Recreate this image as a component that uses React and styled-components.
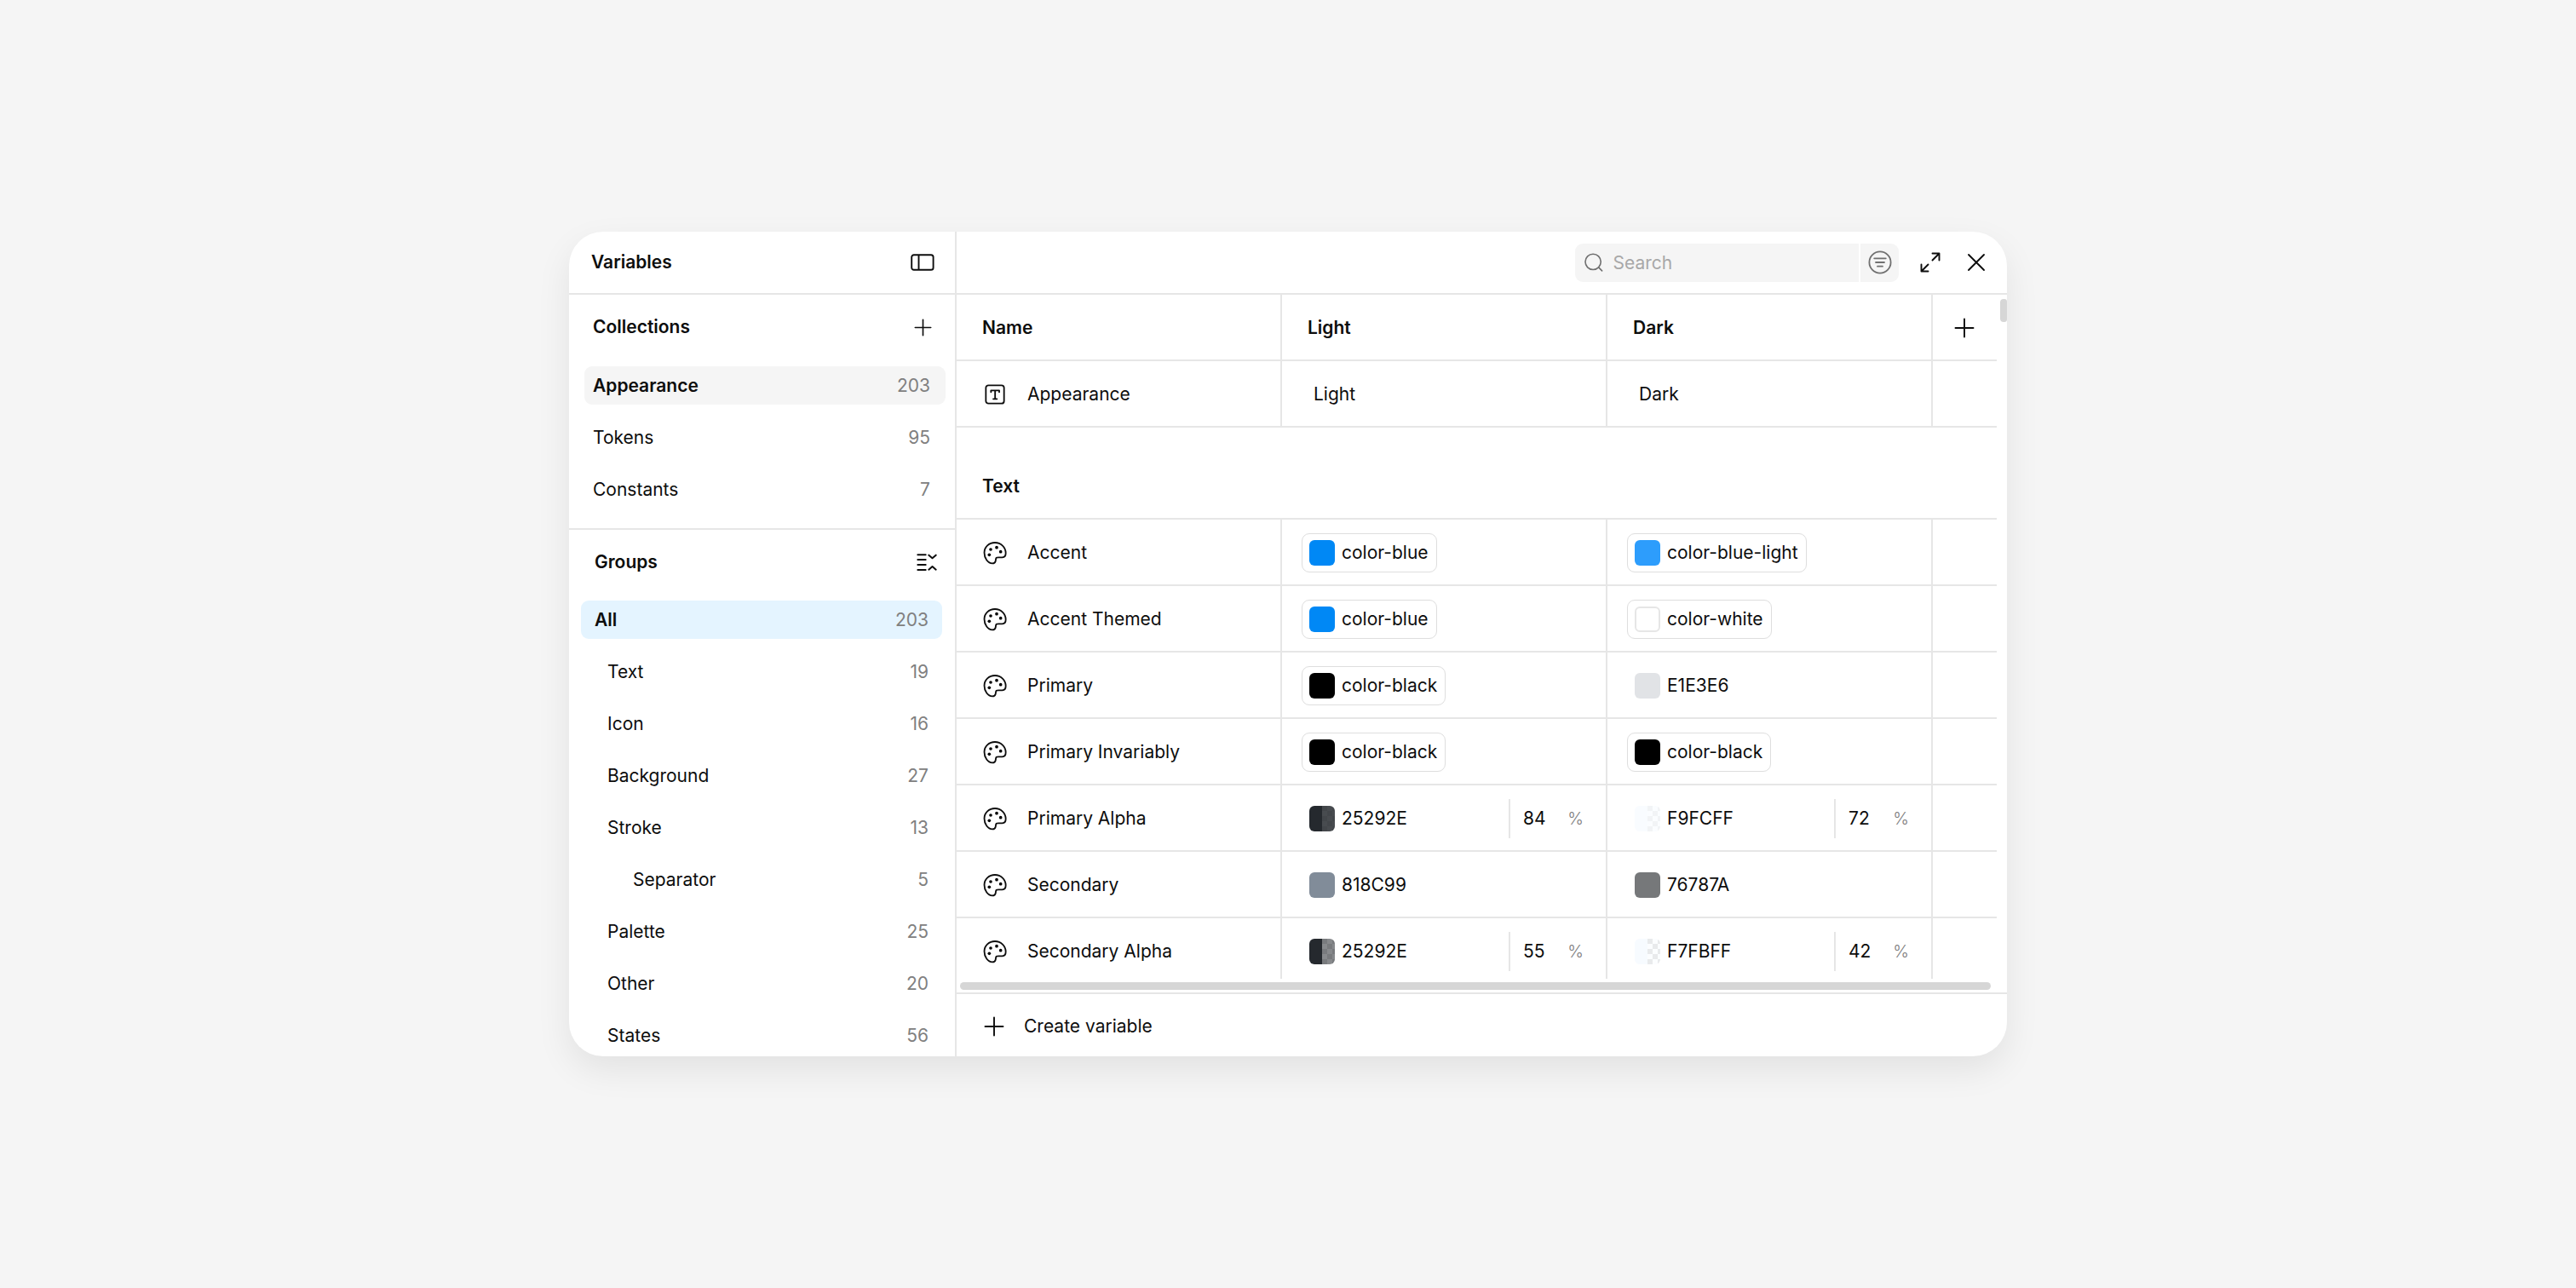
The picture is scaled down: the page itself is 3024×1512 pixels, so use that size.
import { useState } from 'react';
import styled, { createGlobalStyle } from 'styled-components';

const GlobalStyle = createGlobalStyle`
  * {
    box-sizing: border-box;
  }
  body {
    margin: 0;
    background: #f5f5f5;
    color: #0d0d0d;
    font-family: Inter, "Liberation Sans", sans-serif;
    font-size: 21px;
    line-height: 28px;
  }
  button, input {
    font: inherit;
    color: inherit;
  }
`;

const Page = styled.main`
  min-height: 100vh;
  display: flex;
  align-items: center;
  justify-content: center;
  padding: 48px;
`;

const Window = styled.div`
  display: flex;
  width: 100%;
  max-width: 1688px;
  max-height: 968px;
  overflow: hidden;
  background: #fff;
  border-radius: 40px;
  box-shadow: 0 16px 40px rgba(0, 0, 0, 0.08);
`;

const Sidebar = styled.aside`
  flex: none;
  width: 455px;
  border-right: 2px solid #e6e6e6;
`;

const SidebarHeader = styled.header`
  display: flex;
  align-items: center;
  justify-content: space-between;
  height: 74px;
  padding: 0 24px 0 26px;
  border-bottom: 2px solid #e6e6e6;
`;

const Title = styled.h1`
  margin: 0;
  font-size: 21px;
  font-weight: 600;
`;

const IconButton = styled.button`
  display: flex;
  align-items: center;
  justify-content: center;
  padding: 0;
  border: none;
  background: none;
  cursor: pointer;
`;

const Section = styled.section`
  padding: ${({ $groups }) => ($groups ? '0 15px 0 14px' : '0 11px 23px 18px')};
  border-bottom: ${({ $groups }) => ($groups ? 'none' : '2px solid #e6e6e6')};
`;

const SectionHeader = styled.div`
  display: flex;
  align-items: center;
  justify-content: space-between;
  height: 76px;
  padding: ${({ $groups }) => ($groups ? '0 6px 0 16px' : '0 16px 0 10px')};
`;

const SectionTitle = styled.h2`
  margin: 0;
  font-size: 21px;
  font-weight: 600;
`;

const List = styled.ul`
  display: flex;
  flex-direction: column;
  gap: 16px;
  margin: 0;
  padding: ${({ $groups }) => ($groups ? '7px' : '8px')} 0 0;
  list-style: none;
`;

const Item = styled.button`
  display: flex;
  align-items: center;
  justify-content: space-between;
  width: 100%;
  height: 45px;
  padding: ${({ $groups }) => ($groups ? '0 16px' : '0 18px 0 10px')};
  padding-left: ${({ $level }) => ($level ? `${$level * 30 + 1}px` : '')};
  border: none;
  border-radius: 9px;
  background: ${({ $active }) => $active || 'none'};
  font-size: 21px;
  font-weight: ${({ $active }) => ($active ? 600 : 400)};
  cursor: pointer;
`;

const Count = styled.span`
  color: #808080;
  font-weight: 400;
`;

const Main = styled.section`
  display: flex;
  flex-direction: column;
  flex: 1;
  min-width: 0;
`;

const Toolbar = styled.div`
  display: flex;
  flex: none;
  align-items: center;
  justify-content: flex-end;
  height: 74px;
  padding-right: 24px;
  border-bottom: 2px solid #e6e6e6;
`;

const SearchBox = styled.label`
  display: flex;
  align-items: center;
  gap: 12px;
  width: 333px;
  height: 45px;
  padding-left: 11px;
  border-radius: 9px 0 0 9px;
  background: #f5f5f5;
`;

const SearchInput = styled.input`
  width: 100%;
  padding: 2px 0 0;
  border: none;
  outline: none;
  background: none;
  font-size: 21px;

  &::placeholder {
    color: #a8a8a8;
    opacity: 1;
  }
`;

const FilterButton = styled(IconButton)`
  width: 45px;
  height: 45px;
  margin: 0 25px 0 2px;
  border-radius: 0 9px 9px 0;
  background: #f5f5f5;
`;

const WindowButtons = styled.div`
  display: flex;
  gap: 30px;
`;

const Body = styled.div`
  display: flex;
  flex: 0 1 auto;
  min-height: 0;
`;

const TableArea = styled.div`
  flex: 1;
  min-width: 0;
  overflow: hidden;
`;

const Table = styled.table`
  width: 100%;
  table-layout: fixed;
  border-collapse: separate;
  border-spacing: 0;
  font-size: 21px;
`;

const Cell = styled.td`
  height: 78px;
  padding: 1px 0 0 ${({ $indent }) => $indent || 0}px;
  border-bottom: 2px solid #e6e6e6;
  border-right: 2px solid #e6e6e6;
  text-align: left;
  font-weight: 400;

  &:last-child {
    border-right: none;
  }
`;

const HeadCell = styled(Cell)`
  font-weight: 600;
`;

const GroupCell = styled(Cell)`
  height: 108px;
  padding-top: 32px;
  font-weight: 600;
`;

const AddColumn = styled.col`
  width: 75px;
`;

const NameLabel = styled.span`
  display: flex;
  align-items: center;
  gap: 23px;
`;

const Value = styled.div`
  display: flex;
  align-items: center;
  justify-content: space-between;
`;

const Chip = styled.span`
  display: inline-flex;
  align-items: center;
  gap: 8px;
  height: 46px;
  padding: 0 9px 0 8px;
  border: 1px solid ${({ $linked }) => ($linked ? '#dedede' : 'transparent')};
  border-radius: 9px;
`;

const Swatch = styled.span`
  width: 30px;
  height: 30px;
  border-radius: 6px;
  border: ${({ $outlined }) => ($outlined ? '2px solid #e6e6e6' : 'none')};
  background: ${({ $color }) => $color};
`;

// left half is the solid colour, right half shows it over a checkerboard
const AlphaSwatch = styled(Swatch)`
  background:
    linear-gradient(90deg, ${({ $color }) => $color} 50%, ${({ $tint }) => $tint} 50%),
    repeating-conic-gradient(#fff 0 25%, #dedede 0 50%) 15px 0 / 12px 12px;
`;

const Opacity = styled.span`
  display: flex;
  align-items: center;
  justify-content: space-between;
  width: 114px;
  height: 46px;
  padding: 0 26px 0 15px;
  border-left: 2px solid #e6e6e6;
`;

const Unit = styled.span`
  color: #808080;
  font-size: 20px;
  font-weight: 300;
`;

const VerticalTrack = styled.div`
  flex: none;
  width: 12px;
  padding: 5px 0 0 4px;
`;

const VerticalThumb = styled.div`
  height: 27px;
  border-radius: 4px 3px 3px 4px;
  background: #d6d6d6;
`;

const HorizontalTrack = styled.div`
  flex: none;
  padding: 4px 19px 3px 4px;
`;

const HorizontalThumb = styled.div`
  height: 9px;
  border-radius: 5px;
  background: #d6d6d6;
`;

const Footer = styled.footer`
  display: flex;
  flex: none;
  align-items: center;
  height: 75px;
  padding: 2px 0 0 32px;
  border-top: 2px solid #e6e6e6;
`;

const CreateButton = styled(IconButton)`
  gap: 23px;
  font-size: 21px;
`;

const PanelIcon = () => (
  <svg width="28" height="20" viewBox="0 0 28 20" fill="none" stroke="currentColor" strokeWidth="1.9" aria-hidden="true">
    <rect x="1.2" y="1.2" width="25.4" height="17.6" rx="2.6" />
    <path d="M9.5 1v18" />
  </svg>
);

const PlusIcon = ({ size = 24 }) => (
  <svg width={size} height={size} viewBox="0 0 24 24" fill="none" stroke="currentColor" strokeWidth="1.9" strokeLinecap="round" aria-hidden="true">
    <path d="M12 1.5v21M1.5 12h21" />
  </svg>
);

const CollapseIcon = () => (
  <svg width="24" height="20" viewBox="0 0 72 60" fill="none" stroke="currentColor" strokeWidth="6" strokeLinecap="round" strokeLinejoin="round" aria-hidden="true">
    <path d="M4 4h28M4 21h28M4 39h28M4 57h28" />
    <path d="M43 5l12.5 11L68 5M43 56l12.500-11L68 56" />
  </svg>
);

const SearchIcon = () => (
  <svg width="24" height="24" viewBox="0 0 24 24" fill="none" stroke="#707070" strokeWidth="1.8" strokeLinecap="round" aria-hidden="true">
    <circle cx="11.3" cy="11.3" r="10.2" />
    <path d="M18.6 18.6l4.4 4.4" />
  </svg>
);

const FilterIcon = () => (
  <svg width="28" height="28" viewBox="0 0 28 28" fill="none" stroke="#707070" strokeWidth="1.8" strokeLinecap="round" aria-hidden="true">
    <circle cx="14" cy="14" r="12.6" />
    <path d="M7.2 9.3h13.6M9 14h10M11 18.7h6" />
  </svg>
);

const ExpandIcon = () => (
  <svg width="24" height="24" viewBox="0 0 24 24" fill="none" stroke="currentColor" strokeWidth="1.9" strokeLinecap="round" strokeLinejoin="round" aria-hidden="true">
    <path d="M14.5 1.5h8v8M22.5 1.5l-8 8M9.5 22.5h-8v-8M1.5 22.5l8-8" />
  </svg>
);

const CloseIcon = () => (
  <svg width="24" height="24" viewBox="0 0 24 24" fill="none" stroke="currentColor" strokeWidth="1.9" strokeLinecap="round" aria-hidden="true">
    <path d="M3 3l18 18M21 3L3 21" />
  </svg>
);

const StringIcon = () => (
  <svg width="30" height="30" viewBox="0 0 90 90" fill="none" stroke="currentColor" strokeWidth="5.5" strokeLinecap="round" strokeLinejoin="round" aria-hidden="true">
    <rect x="13" y="13" width="64" height="64" rx="9" />
    <path d="M31 37v-6h29v6M45.5 31v29M39 61h13" />
  </svg>
);

const PaletteIcon = () => (
  <svg width="30" height="30" viewBox="0 0 90 90" aria-hidden="true">
    <path
      d="M45 9C24 9 7.5 24 7.5 44C7.5 64 20 82 36 82C41 82 45.5 80 47 74C48.5 68 47.5 64 50 62C52 60.5 57 61 62 61L71 61C79 61 83 56 83 46C83 25 66 9 45 9Z"
      fill="none"
      stroke="currentColor"
      strokeWidth="5.5"
    />
    <circle cx="30" cy="33" r="5.5" />
    <circle cx="51" cy="26" r="5.5" />
    <circle cx="65" cy="41" r="5.5" />
    <circle cx="25" cy="52" r="5.5" />
  </svg>
);

const collections = [
  { name: 'Appearance', count: 203 },
  { name: 'Tokens', count: 95 },
  { name: 'Constants', count: 7 },
];

const groups = [
  { name: 'All', count: 203, level: 0 },
  { name: 'Text', count: 19, level: 1 },
  { name: 'Icon', count: 16, level: 1 },
  { name: 'Background', count: 27, level: 1 },
  { name: 'Stroke', count: 13, level: 1 },
  { name: 'Separator', count: 5, level: 2 },
  { name: 'Palette', count: 25, level: 1 },
  { name: 'Other', count: 20, level: 1 },
  { name: 'States', count: 56, level: 1 },
];

const blue = { label: 'color-blue', color: '#0088f5', linked: true };
const black = { label: 'color-black', color: '#000000', linked: true };

const variables = [
  { name: 'Accent', light: blue, dark: { label: 'color-blue-light', color: '#2d9dfc', linked: true } },
  { name: 'Accent Themed', light: blue, dark: { label: 'color-white', color: '#ffffff', linked: true } },
  { name: 'Primary', light: black, dark: { label: 'E1E3E6', color: '#e1e3e6' } },
  { name: 'Primary Invariably', light: black, dark: black },
  {
    name: 'Primary Alpha',
    light: { label: '25292E', color: '#25292e', opacity: 84 },
    dark: { label: 'F9FCFF', color: '#f9fcff', opacity: 72 },
  },
  { name: 'Secondary', light: { label: '818C99', color: '#818c99' }, dark: { label: '76787A', color: '#76787a' } },
  {
    name: 'Secondary Alpha',
    light: { label: '25292E', color: '#25292e', opacity: 55 },
    dark: { label: 'F7FBFF', color: '#f7fbff', opacity: 42 },
  },
];

function ColorValue({ value }) {
  const { label, color, linked, opacity } = value;

  return (
    <Value>
      <Chip $linked={linked}>
        {opacity ? (
          <AlphaSwatch $color={color} $tint={color + Math.round(opacity * 2.55).toString(16)} />
        ) : (
          <Swatch $color={color} $outlined={color === '#ffffff'} />
        )}
        {label}
      </Chip>
      {opacity && (
        <Opacity>
          {opacity}
          <Unit>%</Unit>
        </Opacity>
      )}
    </Value>
  );
}

function App() {
  const [collection, setCollection] = useState('Appearance');
  const [group, setGroup] = useState('All');
  const [query, setQuery] = useState('');

  return (
    <Page>
      <GlobalStyle />
      <Window>
        <Sidebar>
          <SidebarHeader>
            <Title>Variables</Title>
            <IconButton aria-label="Toggle sidebar">
              <PanelIcon />
            </IconButton>
          </SidebarHeader>
          <Section>
            <SectionHeader>
              <SectionTitle>Collections</SectionTitle>
              <IconButton aria-label="Add collection">
                <PlusIcon size={21} />
              </IconButton>
            </SectionHeader>
            <List>
              {collections.map((item) => (
                <li key={item.name}>
                  <Item $active={item.name === collection && '#f5f5f5'} onClick={() => setCollection(item.name)}>
                    {item.name}
                    <Count>{item.count}</Count>
                  </Item>
                </li>
              ))}
            </List>
          </Section>
          <Section $groups>
            <SectionHeader $groups>
              <SectionTitle>Groups</SectionTitle>
              <IconButton aria-label="Collapse groups">
                <CollapseIcon />
              </IconButton>
            </SectionHeader>
            <List $groups>
              {groups.map((item) => (
                <li key={item.name}>
                  <Item
                    $groups
                    $level={item.level}
                    $active={item.name === group && '#e4f4ff'}
                    onClick={() => setGroup(item.name)}
                  >
                    {item.name}
                    <Count>{item.count}</Count>
                  </Item>
                </li>
              ))}
            </List>
          </Section>
        </Sidebar>
        <Main>
          <Toolbar>
            <SearchBox>
              <SearchIcon />
              <SearchInput
                aria-label="Search"
                placeholder="Search"
                value={query}
                onChange={(event) => setQuery(event.target.value)}
              />
            </SearchBox>
            <FilterButton aria-label="Filter">
              <FilterIcon />
            </FilterButton>
            <WindowButtons>
              <IconButton aria-label="Expand">
                <ExpandIcon />
              </IconButton>
              <IconButton aria-label="Close">
                <CloseIcon />
              </IconButton>
            </WindowButtons>
          </Toolbar>
          <Body>
            <TableArea>
              <Table>
                <colgroup>
                  <col />
                  <col />
                  <col />
                  <AddColumn />
                </colgroup>
                <thead>
                  <tr>
                    <HeadCell as="th" $indent={30}>Name</HeadCell>
                    <HeadCell as="th" $indent={30}>Light</HeadCell>
                    <HeadCell as="th" $indent={30}>Dark</HeadCell>
                    <HeadCell as="th" $indent={25}>
                      <IconButton aria-label="Add mode">
                        <PlusIcon />
                      </IconButton>
                    </HeadCell>
                  </tr>
                </thead>
                <tbody>
                  <tr>
                    <Cell as="th" $indent={30}>
                      <NameLabel>
                        <StringIcon />
                        Appearance
                      </NameLabel>
                    </Cell>
                    <Cell $indent={37}>Light</Cell>
                    <Cell $indent={37}>Dark</Cell>
                    <Cell />
                  </tr>
                  <tr>
                    <GroupCell as="th" colSpan={4} $indent={30}>Text</GroupCell>
                  </tr>
                  {variables.map((variable) => (
                    <tr key={variable.name}>
                      <Cell as="th" $indent={30}>
                        <NameLabel>
                          <PaletteIcon />
                          {variable.name}
                        </NameLabel>
                      </Cell>
                      <Cell $indent={23}>
                        <ColorValue value={variable.light} />
                      </Cell>
                      <Cell $indent={23}>
                        <ColorValue value={variable.dark} />
                      </Cell>
                      <Cell />
                    </tr>
                  ))}
                </tbody>
              </Table>
            </TableArea>
            <VerticalTrack>
              <VerticalThumb />
            </VerticalTrack>
          </Body>
          <HorizontalTrack>
            <HorizontalThumb />
          </HorizontalTrack>
          <Footer>
            <CreateButton>
              <PlusIcon />
              Create variable
            </CreateButton>
          </Footer>
        </Main>
      </Window>
    </Page>
  );
}

export default App;
